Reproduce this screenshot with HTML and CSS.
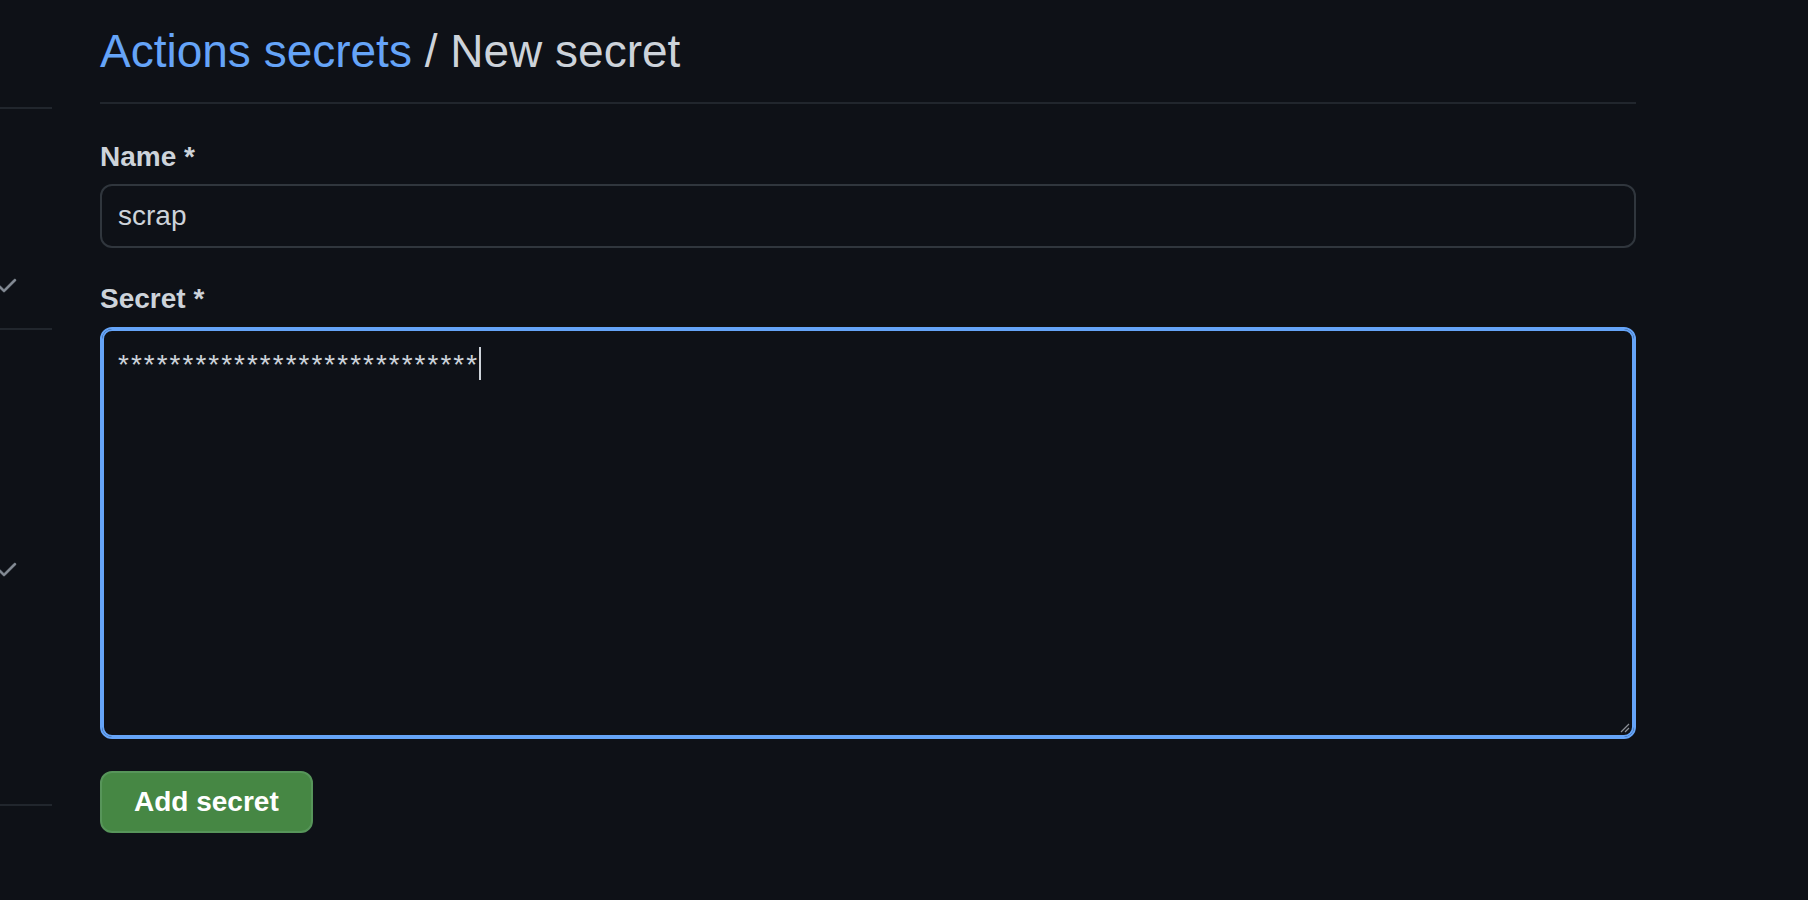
FILE: index.html
```html
<!DOCTYPE html>
<html>
<head>
  <title>New secret</title>
  <link rel="stylesheet" href="styles.css">
</head>
<body>
  <div class="layout">
    <nav class="sidebar">
      <div class="side-group side-top"></div>
      <div class="side-group side-mid">
        <svg class="check" viewBox="0 0 16 16" width="24" height="24"><path d="M13.78 4.22a.75.75 0 0 1 0 1.06l-7.25 7.25a.75.75 0 0 1-1.06 0L2.22 9.28a.751.751 0 0 1 .018-1.042.751.751 0 0 1 1.042-.018L6 10.94l6.72-6.72a.75.75 0 0 1 1.06 0Z"/></svg>
      </div>
      <div class="side-group side-low">
        <svg class="check" viewBox="0 0 16 16" width="24" height="24"><path d="M13.78 4.22a.75.75 0 0 1 0 1.06l-7.25 7.25a.75.75 0 0 1-1.06 0L2.22 9.28a.751.751 0 0 1 .018-1.042.751.751 0 0 1 1.042-.018L6 10.94l6.72-6.72a.75.75 0 0 1 1.06 0Z"/></svg>
      </div>
    </nav>

    <main class="content">
      <h2 class="subhead"><a href="#">Actions secrets</a> / New secret</h2>

      <form>
        <div class="form-group">
          <label class="field-label">Name *</label>
          <div class="text-input">scrap</div>
        </div>

        <div class="form-group">
          <label class="field-label">Secret *</label>
          <div class="secret-box">
            <span class="secret-text">****************************</span><span class="caret"></span>
            <svg class="grip" viewBox="0 0 12 12" width="12" height="12"><path d="M11 3 3 11M11 7 7 11"/></svg>
          </div>
        </div>

        <button type="button" class="btn-primary">Add secret</button>
      </form>
    </main>
  </div>
</body>
</html>
```

FILE: styles.css
```css
html, body {
  margin: 0;
  height: 100%;
  background: #0e1117;
  color: #cdd3da;
  font-family: "Liberation Sans", Arial, sans-serif;
}
.layout {
  display: flex;
  align-items: flex-start;
}

/* left settings menu, mostly scrolled out of view */
.sidebar {
  width: 52px;
  flex-shrink: 0;
  overflow: hidden;
}
.side-group {
  border-bottom: 2px solid #21262d;
}
.side-top {
  height: 107px;
}
.side-mid {
  height: 219px;
}
.side-low {
  height: 474px;
}
.check {
  display: block;
  margin-left: -5px;
  fill: #858c96;
  stroke: #858c96;
  stroke-width: 0.3;
}
.side-mid .check {
  padding-top: 164px;
}
.side-low .check {
  padding-top: 227px;
}

.content {
  margin-left: 48px;
  width: 1536px;
}
.subhead {
  margin: 21px 0 0;
  padding-bottom: 21px;
  border-bottom: 2px solid #21262d;
  font-size: 46px;
  line-height: 60px;
  font-weight: 400;
  color: #cdd3da;
}
.subhead a {
  color: #65a4f8;
  text-decoration: none;
}

.form-group {
  margin-top: 33px;
}
.form-group + .form-group {
  margin-top: 31px;
}
.field-label {
  display: block;
  font-size: 28px;
  line-height: 40px;
  font-weight: 700;
  margin-bottom: 7px;
}
.text-input {
  box-sizing: border-box;
  height: 64px;
  padding: 10px 16px;
  border: 2px solid #30363d;
  border-radius: 12px;
  font-size: 28px;
  line-height: 40px;
}
.secret-box {
  position: relative;
  box-sizing: border-box;
  height: 412px;
  margin-top: 8px;
  padding: 16px 16px;
  border: 2px solid #65a4f8;
  border-radius: 12px;
  box-shadow: inset 0 0 0 2px #65a4f8;
  font-size: 28px;
  line-height: 40px;
}
.secret-text {
  letter-spacing: 2px;
}
.caret {
  display: inline-block;
  width: 2px;
  height: 33px;
  vertical-align: -6px;
  background: #cdd3da;
}
.grip {
  position: absolute;
  right: 4px;
  bottom: 4px;
  fill: none;
  stroke: #8b8f96;
  stroke-width: 1.2;
}

.btn-primary {
  margin-top: 32px;
  height: 62px;
  padding: 0 32px;
  border: 2px solid #57955a;
  border-radius: 12px;
  background: #468744;
  color: #fff;
  font-family: "Liberation Sans", Arial, sans-serif;
  font-size: 28px;
  font-weight: 700;
  line-height: 40px;
  cursor: pointer;
}
```
